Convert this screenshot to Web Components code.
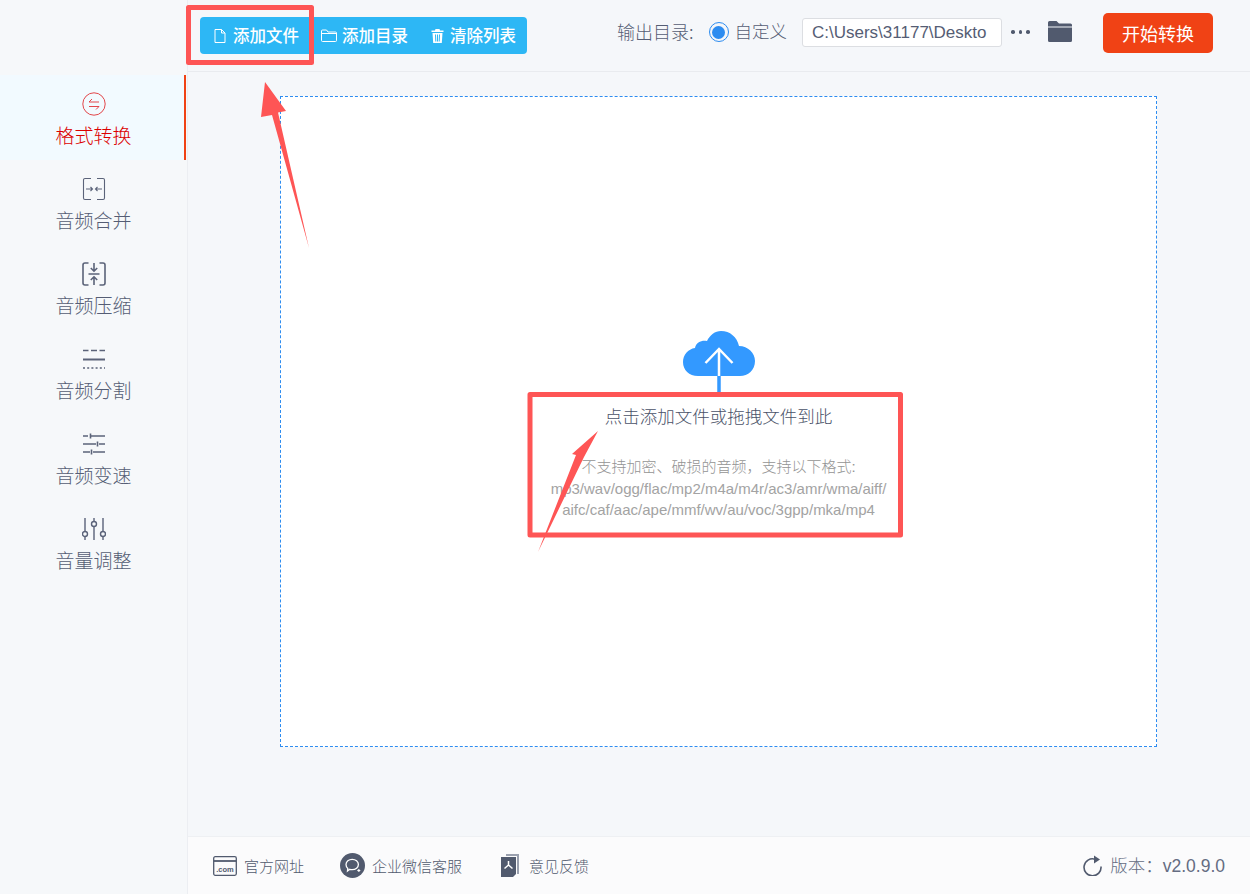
<!DOCTYPE html>
<html lang="zh">
<head>
<meta charset="utf-8">
<title>音频转换</title>
<style>
  html, body { margin: 0; height: 100%; }
  body { font-family: "Liberation Sans", "Noto Sans CJK SC", sans-serif; overflow: hidden; }
</style>
</head>
<body>

<app-shell>
  <side-nav slot="side">
    <nav-item active label="格式转换">
      <svg viewBox="0 0 24 24" width="24" height="24" fill="none" stroke="#e2474b" stroke-width="1">
        <circle cx="12" cy="12" r="11.200"/>
        <path d="M17 10H7l3-3M7 14.500h10l-3 3"/>
      </svg>
    </nav-item>
    <nav-item label="音频合并">
      <svg viewBox="0 0 24 24" width="24" height="24" fill="none" stroke="#5b6379" stroke-width="1.100">
        <path d="M9 1.500H3A1.500 1.500 0 0 0 1.500 3v18A1.500 1.500 0 0 0 3 22.500h6M15 1.500h6A1.500 1.500 0 0 1 22.500 3v18a1.500 1.500 0 0 1-1.500 1.500h-6"/>
        <path d="M4 12h6.500M8.500 10l2 2-2 2M20 12h-6.500M15.500 10l-2 2 2 2"/>
      </svg>
    </nav-item>
    <nav-item label="音频压缩">
      <svg viewBox="0 0 24 24" width="24" height="24" fill="none" stroke="#5b6379" stroke-width="1.600">
        <path d="M6.500 1H3a2 2 0 0 0-2 2v18a2 2 0 0 0 2 2h3.500M17.500 1H21a2 2 0 0 1 2 2v18a2 2 0 0 1-2 2h-3.500"/>
        <path d="M12 1v8M8.800 6 12 9.200 15.200 6M6.500 12h11M12 23v-8M8.800 18 12 14.800l3.200 3.200"/>
      </svg>
    </nav-item>
    <nav-item label="音频分割">
      <svg viewBox="0 0 24 24" width="24" height="24" fill="none" stroke="#5b6379">
        <path d="M1 3.500h5.500M9 3.500h6M17.500 3.500H23" stroke-width="1.700"/>
        <path d="M1 12.500h22" stroke-width="2"/>
        <path d="M1 21h22" stroke-width="1.700" stroke-dasharray="2 2.200"/>
      </svg>
    </nav-item>
    <nav-item label="音频变速">
      <svg viewBox="0 0 24 24" width="24" height="24" fill="none" stroke="#5b6379" stroke-width="1.600">
        <path d="M1 4h5M9 4H23M8.500 1.500v5M1 12h13M17 12h6M15.500 9.500v5M1 20h7M11 20h12M9.500 17.500v5"/>
      </svg>
    </nav-item>
    <nav-item label="音量调整">
      <svg viewBox="0 0 24 24" width="24" height="24" fill="none" stroke="#5b6379" stroke-width="1.400">
        <path d="M3 1v13M3 20v3M12 1v3M12 10v13M21 1v13M21 20v3"/>
        <circle cx="3" cy="17" r="2.500"/><circle cx="12" cy="7" r="2.500"/><circle cx="21" cy="17" r="2.500"/>
      </svg>
    </nav-item>
  </side-nav>

  <top-bar slot="top">
    <tool-group slot="tools">
      <tool-button label="添加文件" style="--pad-l:14px;--pad-r:11px;--gap:7px">
        <svg viewBox="0 0 12 14" width="12" height="14" fill="none" stroke="#fff" stroke-width="1"><path d="M1 .5h6.500L11 4v9.500H1zM7.500.5V4H11"/></svg>
      </tool-button>
      <tool-button label="添加目录" style="--pad-l:11px;--pad-r:11px;--gap:5px">
        <svg viewBox="0 0 16 13" width="16" height="13" fill="none" stroke="#fff" stroke-width="1"><path d="M.5 2a1 1 0 0 1 1-1h4l1.500 2h7.500a1 1 0 0 1 1 1v7.500a1 1 0 0 1-1 1h-13a1 1 0 0 1-1-1zM.5 4.500h15"/></svg>
      </tool-button>
      <tool-button label="清除列表" style="--pad-l:12px;--pad-r:11px;--gap:6px">
        <svg viewBox="0 0 13 14" width="13" height="14" fill="#fff"><path d="M4.500 0h4l.5 1.500h3.500V3H.5V1.500H4zM1.500 4h10l-.7 10H2.200zM4 5.500l.3 7h1l-.3-7zm2 0v7h1v-7zm2 0-.3 7h1l.3-7z"/></svg>
      </tool-button>
    </tool-group>
    <output-picker slot="output" path="C:\Users\31177\Deskto"></output-picker>
  </top-bar>

  <drop-zone slot="main"></drop-zone>

  <foot-bar slot="foot">
    <foot-link label="官方网址" style="--gap:7px;--left:25px">
      <svg viewBox="0 0 24 20" width="24" height="20" fill="none" stroke="#515a6e" stroke-width="1.300">
        <rect x=".7" y=".7" width="22.600" height="18.600" rx="1.500"/><path d="M.7 5h22.600" stroke-width="1.800"/>
        <text x="12" y="15.500" text-anchor="middle" font-family="Liberation Sans" font-size="7.500" font-weight="700" fill="#515a6e" stroke="none">.com</text>
      </svg>
    </foot-link>
    <foot-link label="企业微信客服" style="--gap:7px;--left:36px">
      <svg viewBox="0 0 25 25" width="25" height="25">
        <circle cx="12.500" cy="12.500" r="12.500" fill="#515a6e"/>
        <path d="M6 11.500c0-3 2.800-5.200 6.200-5.200s6.200 2.200 6.200 5.200-2.800 5.200-6.200 5.200c-.9 0-1.700-.1-2.400-.4L7.500 18l.3-2.600C6.700 14.500 6 13.100 6 11.500z" fill="none" stroke="#fff" stroke-width="1.300"/>
        <path d="M17 17.500l1.800-1.600 1.800 1.500-1.700 1.600z" fill="#fff"/>
      </svg>
    </foot-link>
    <foot-link label="意见反馈" style="--gap:10px;--left:39px">
      <svg viewBox="0 0 18 23" width="18" height="23">
        <path d="M5 0h13v20h-2V2H5z" fill="#9aa0ae"/>
        <path d="M0 3h15v17l-3 3H0z" fill="#515a6e"/>
        <path d="M7.500 7v4M7.500 11l-4 3.500M7.500 11l4 3.500" fill="none" stroke="#fff" stroke-width="1.500"/>
      </svg>
    </foot-link>
    <version-tag slot="end" text="版本：v2.0.9.0"></version-tag>
  </foot-bar>
</app-shell>

<mark-up></mark-up>

<template id="app-shell-tpl">
  <style>
    :host { display: grid; grid-template-columns: 188px 1fr; grid-template-rows: 72px 1fr 58px; width: 1250px; height: 894px; background: #f5f7fa; }
    .side { grid-row: 1 / 4; border-right: 1px solid #eceef2; background: #f6f8fa; }
    .top { border-bottom: 1px solid #e9ebef; }
    .main { min-height: 0; }
    .foot { border-top: 1px solid #eef0f3; background: #fbfbfc; }
  </style>
  <div class="side"><slot name="side"></slot></div>
  <div class="top"><slot name="top"></slot></div>
  <div class="main"><slot name="main"></slot></div>
  <div class="foot"><slot name="foot"></slot></div>
</template>

<script>
const cjk = '"Noto Sans CJK SC", "Liberation Sans", sans-serif'

class AppShell extends HTMLElement {
  constructor() {
    super()
    this.attachShadow({ mode: 'open' })
    this.shadowRoot.appendChild(document.getElementById('app-shell-tpl').content.cloneNode(true))
  }
}

class SideNav extends HTMLElement {
  constructor() {
    super()
    this.attachShadow({ mode: 'open' }).innerHTML = `
    <style>
      :host { display: flex; flex-direction: column; padding-top: 75px; }
    </style>
    <slot></slot>`
  }
}

class NavItem extends HTMLElement {
  constructor() {
    super()
    let label = this.getAttribute('label')
    this.attachShadow({ mode: 'open' }).innerHTML = `
    <style>
      :host { display: flex; flex-direction: column; align-items: center; box-sizing: border-box; height: 85px; padding-top: 17px; color: #555d74; }
      :host([active]) { background: #f2faff; color: #dc0000; box-shadow: inset -2px 0 0 #f04215; margin-right: 1px; padding-left: 1px; }
      .icon { display: flex; height: 24px; }
      .label { margin-top: 6.500px; font: 300 19px/24px ${cjk}; white-space: nowrap; }
    </style>
    <div class="icon"><slot></slot></div>
    <div class="label">${label}</div>`
  }
}

class TopBar extends HTMLElement {
  constructor() {
    super()
    this.attachShadow({ mode: 'open' }).innerHTML = `
    <style>
      :host { display: flex; align-items: flex-start; justify-content: space-between; height: 71px; padding: 0 37px 0 12px; box-sizing: border-box; }
      .tools { margin-top: 17px; }
      .output { margin-top: 13px; }
    </style>
    <div class="tools"><slot name="tools"></slot></div>
    <div class="output"><slot name="output"></slot></div>`
  }
}

class ToolGroup extends HTMLElement {
  constructor() {
    super()
    this.attachShadow({ mode: 'open' }).innerHTML = `
    <style>
      :host { display: flex; height: 37px; background: #2db7f5; border-radius: 4px; }
    </style>
    <slot></slot>`
  }
}

class ToolButton extends HTMLElement {
  constructor() {
    super()
    this.attachShadow({ mode: 'open' }).innerHTML = `
    <style>
      :host { display: flex; align-items: center; gap: var(--gap); padding: 0 var(--pad-r) 0 var(--pad-l); color: #fff; font: 500 16.500px/37px ${cjk}; white-space: nowrap; }
      ::slotted(svg) { flex: none; }
    </style>
    <slot></slot><span>${this.getAttribute('label')}</span>`
  }
}

class OutputPicker extends HTMLElement {
  constructor() {
    super()
    this.attachShadow({ mode: 'open' }).innerHTML = `
    <style>
      :host { display: flex; align-items: center; height: 40px; color: #555d74; font: 300 17.500px/24px ${cjk}; white-space: nowrap; }
      .txt { position: relative; top: -2px; }
      .lead { font-size: 18px; }
      .radio { width: 20px; height: 20px; box-sizing: border-box; border: 1.500px solid #2d8cf0; border-radius: 50%; margin: 0 6px 0 15px; display: flex; align-items: center; justify-content: center; position: relative; top: -1px; }
      .radio i { width: 13px; height: 13px; border-radius: 50%; background: #2d8cf0; }
      .path { box-sizing: border-box; width: 200px; height: 29px; margin-left: 15px; padding: 0 10px 0 9px; background: #fff; border: 1px solid #dcdee2; border-radius: 3px; font: 17px/27px "Liberation Sans", sans-serif; position: relative; top: -1px; }
      .dots { display: flex; gap: 4px; margin-left: 9px; width: 19px; position: relative; top: -1px; }
      .dots i { flex: none; width: 3.500px; height: 3.500px; border-radius: 50%; background: #515a6e; }
      svg { margin-left: 18px; position: relative; top: -2px; }
      .start { margin-left: 31px; width: 110px; height: 40px; background: #f04215; border-radius: 5px; color: #fff; font: 400 18px/40px ${cjk}; text-align: center; }
    </style>
    <span class="txt lead">输出目录:</span>
    <span class="radio"><i></i></span>
    <span class="txt">自定义</span>
    <div class="path">${this.getAttribute('path')}</div>
    <div class="dots"><i></i><i></i><i></i></div>
    <svg viewBox="0 0 24 21" width="24" height="21"><path d="M1.500 0h7l2.500 2.500h11.500A1.500 1.500 0 0 1 24 4v15.500a1.500 1.500 0 0 1-1.500 1.500h-21A1.500 1.500 0 0 1 0 19.500v-18A1.500 1.500 0 0 1 1.500 0z" fill="#515a6e"/><path d="M0 6h24" stroke="#f5f7fa" stroke-width="1"/></svg>
    <div class="start">开始转换</div>`
  }
}

class DropZone extends HTMLElement {
  constructor() {
    super()
    this.attachShadow({ mode: 'open' }).innerHTML = `
    <style>
      :host { display: flex; flex-direction: column; align-items: center; box-sizing: border-box; width: 877px; height: 651px; margin: 24px 0 0 92px; padding-top: 234px; background: #fff; border: 1px dashed #2d8cf0; }
      svg { display: block; flex: none; }
      h3 { margin: 12px 0 0; font: 300 17.500px/24px ${cjk}; color: #4a5268; }
      p { margin: 28px 0 0; font: 15px/21.500px "Liberation Sans", ${cjk}; color: #a3a3a3; text-align: center; white-space: nowrap; }
      p span { font-weight: 300; color: #949494; }
    </style>
    <svg viewBox="0 0 72 61" width="72" height="61">
      <path d="M15 45C6 45 0 39 0 31c0-7 5-13 12-14 1-6 7-8 12-7C27 4 32 0 38 0c9 0 16 6 18 15 9 0 16 7 16 15 0 9-7 15-15 15z" fill="#3399ff"/>
      <path d="M36 45V61" stroke="#3399ff" stroke-width="3.500"/>
      <path d="M36 45V18M22.500 32 36 18l13.500 14" fill="none" stroke="#fff" stroke-width="2.500"/>
    </svg>
    <h3>点击添加文件或拖拽文件到此</h3>
    <p><span>不支持加密、破损的音频，支持以下格式:</span><br>mp3/wav/ogg/flac/mp2/m4a/m4r/ac3/amr/wma/aiff/<br>aifc/caf/aac/ape/mmf/wv/au/voc/3gpp/mka/mp4</p>`
  }
}

class FootBar extends HTMLElement {
  constructor() {
    super()
    this.attachShadow({ mode: 'open' }).innerHTML = `
    <style>
      :host { display: flex; align-items: center; height: 57px; padding: 0 25px 0 0; box-sizing: border-box; }
      .end { margin-left: auto; }
    </style>
    <slot></slot>
    <div class="end"><slot name="end"></slot></div>`
  }
}

class FootLink extends HTMLElement {
  constructor() {
    super()
    this.attachShadow({ mode: 'open' }).innerHTML = `
    <style>
      :host { display: flex; align-items: center; gap: var(--gap); margin-left: var(--left); color: #515a6e; font: 300 15px/23px ${cjk}; white-space: nowrap; }
      ::slotted(svg) { flex: none; }
    </style>
    <slot></slot><span>${this.getAttribute('label')}</span>`
  }
}

class VersionTag extends HTMLElement {
  constructor() {
    super()
    this.attachShadow({ mode: 'open' }).innerHTML = `
    <style>
      :host { display: flex; align-items: center; gap: 8px; color: #646c82; font: 300 17.500px/24px "Liberation Sans", ${cjk}; white-space: nowrap; }
    </style>
    <svg viewBox="0 0 19 21" width="19" height="21" fill="none" stroke="#515a6e" stroke-width="1.600">
      <path d="M12 4.200A8.500 8.500 0 1 0 18 11.500"/>
      <path d="M11 .5l6 4-6 4z" fill="#515a6e" stroke="none"/>
    </svg>
    <span>${this.getAttribute('text')}</span>`
  }
}

// red marks drawn over the screenshot, they sit on top of everything
class MarkUp extends HTMLElement {
  constructor() {
    super()
    this.attachShadow({ mode: 'open' }).innerHTML = `
    <style>
      :host { position: absolute; left: 0; top: 0; width: 1250px; height: 894px; pointer-events: none; }
      svg { display: block; }
    </style>
    <svg viewBox="0 0 1250 894" width="1250" height="894">
      <g fill="none" stroke="#fe5555" stroke-width="5" stroke-linejoin="round">
        <rect x="188.500" y="7.500" width="123" height="55"/>
        <rect x="530" y="394.500" width="370.500" height="140.500"/>
      </g>
      <g fill="#fe5555">
        <polygon points="265,82 286,111 278,112.500 309,248 272,115 261,117"/>
        <polygon points="598,431 584,457 538,552 576,455 572,454"/>
      </g>
    </svg>`
  }
}

customElements.define('app-shell', AppShell)
customElements.define('side-nav', SideNav)
customElements.define('nav-item', NavItem)
customElements.define('top-bar', TopBar)
customElements.define('tool-group', ToolGroup)
customElements.define('tool-button', ToolButton)
customElements.define('output-picker', OutputPicker)
customElements.define('drop-zone', DropZone)
customElements.define('foot-bar', FootBar)
customElements.define('foot-link', FootLink)
customElements.define('version-tag', VersionTag)
customElements.define('mark-up', MarkUp)
</script>
</body>
</html>
